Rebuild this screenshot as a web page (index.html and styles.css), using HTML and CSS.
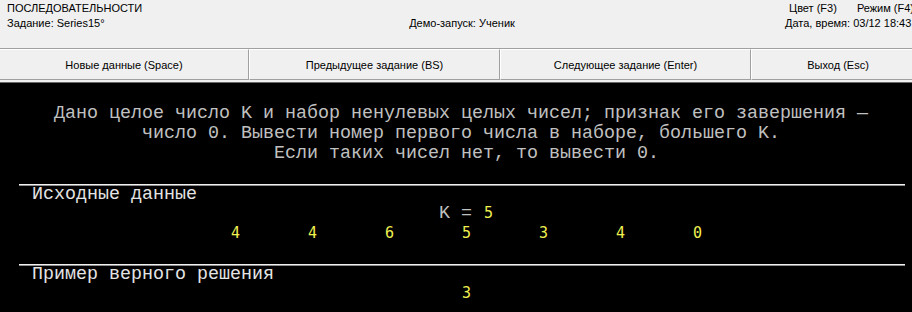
FILE: index.html
```html
<!DOCTYPE html>
<html lang="ru">
<head>
    <meta charset="UTF-8">
    <meta name="viewport" content="width=device-width, initial-scale=1.0">
    <title>Series15 - Демо-запуск</title>
    <link rel="stylesheet" href="styles.css">
</head>
<body>
    <div class="window">

        <!-- Top info bar -->
        <header class="topbar">
            <div class="topbar-left">
                <div>ПОСЛЕДОВАТЕЛЬНОСТИ</div>
                <div>Задание: Series15°</div>
            </div>
            <div class="topbar-center">Демо-запуск: Ученик</div>
            <div class="topbar-right">
                <div class="keys"><span>Цвет (F3)</span><span>Режим (F4)</span></div>
                <div>Дата, время: 03/12 18:43</div>
            </div>
        </header>

        <!-- Buttons -->
        <nav class="toolbar">
            <div class="btn">Новые данные (Space)</div>
            <div class="btn">Предыдущее задание (BS)</div>
            <div class="btn">Следующее задание (Enter)</div>
            <div class="btn">Выход (Esc)</div>
        </nav>

        <!-- Console screen, 80 columns -->
        <main class="console">
            <div class="screen">
                <div class="task">
                    <div>Дано целое число K и набор ненулевых целых чисел; признак его завершения —</div>
                    <div>число 0. Вывести номер первого числа в наборе, большего K.</div>
                    <div class="shift">Если таких чисел нет, то вывести 0.</div>
                </div>
                <div class="blank"></div>

                <div class="rule"></div>
                <div class="title"> Исходные данные</div>
                <div class="row">                                      K = <span class="num">5</span></div>
                <div class="row">                   <span class="num">4</span>      <span class="num">4</span>      <span class="num">6</span>      <span class="num">5</span>      <span class="num">3</span>      <span class="num">4</span>      <span class="num">0</span></div>
                <div class="blank"></div>

                <div class="rule"></div>
                <div class="title"> Пример верного решения</div>
                <div class="row">                                        <span class="num">3</span></div>
            </div>
        </main>
    </div>
</body>
</html>
```

FILE: styles.css
```css
html, body {
    margin: 0;
    overflow: hidden;
    background: #000;
}

.window {
    width: 924px;
}

/* top bar */
.topbar {
    display: grid;
    grid-template-columns: 1fr auto 1fr;
    height: 48px;
    box-sizing: border-box;
    padding-top: 1px;
    background: #f0f0f0;
    color: #000;
    font-family: "Liberation Sans", Arial, sans-serif;
    font-size: 11px;
    line-height: 15px;
}
.topbar-left {
    padding-left: 7px;
}
.topbar-center {
    padding-top: 15px;
}
.topbar-right {
    justify-self: end;
    width: 139px;
}
.keys {
    display: flex;
    gap: 20px;
    padding-left: 4px;
}

/* buttons */
.toolbar {
    display: grid;
    grid-template-columns: 249px 251px 251px 1fr;
    background: #f0f0f0;
    border-top: 1px solid #a0a0a0;
    border-bottom: 2px solid #f0f0f0;
}
.btn {
    box-sizing: border-box;
    padding-top: 2px;
    line-height: 27px;
    text-align: center;
    color: #000;
    font-family: "Liberation Sans", Arial, sans-serif;
    font-size: 11px;
    border-top: 1px solid #fff;
    border-bottom: 1px solid #a0a0a0;
    border-left: 1px solid #fff;
    border-right: 1px solid #a0a0a0;
}
.btn:first-child {
    border-left: none;
}
.btn:last-child {
    border-right: none;
}

/* console */
.console {
    background: #000;
    border-top: 1px solid #696969;
    padding: 21px 0 0 21px;
    height: 208px;
    overflow: hidden;
    color: #c0c0c0;
    font-family: "Liberation Mono", "Courier New", monospace;
    font-size: 18.33px;
    line-height: 20px;
}
.screen {
    width: 880px;
}
.task {
    text-align: center;
}
.task .shift {
    padding-left: 11px;
}
.blank {
    height: 20px;
}
.rule {
    height: 0;
    margin: 0 -4px 0 -2px;
    border-top: 1px solid #f0f0f0;
    border-bottom: 1px solid #8c8c8c;
}
.title {
    white-space: pre;
    line-height: 18px;
    color: #e4e4e4;
}
.row {
    white-space: pre;
}
.num {
    display: inline-block;
    width: 11px;
    text-align: center;
    line-height: 15px;
    color: #f0f050;
    font-family: "DejaVu Sans Mono", monospace;
    font-size: 15px;
}
```
